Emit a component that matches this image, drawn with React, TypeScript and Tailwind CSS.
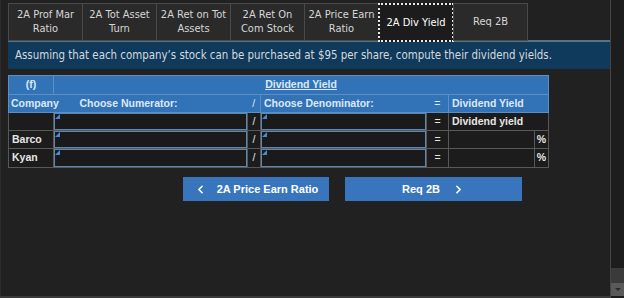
import { ChevronLeft, ChevronRight } from 'lucide-react';

const tabs = [
  { label: ['2A Prof Mar', 'Ratio'] },
  { label: ['2A Tot Asset', 'Turn'] },
  { label: ['2A Ret on Tot', 'Assets'] },
  { label: ['2A Ret On', 'Com Stock'] },
  { label: ['2A Price Earn', 'Ratio'] },
  { label: ['2A Div Yield'], active: true },
  { label: ['Req 2B'] },
];

const rows = [
  { company: '', result: 'Dividend yield', pct: false },
  { company: 'Barco', result: '', pct: true },
  { company: 'Kyan', result: '', pct: true },
];

function InputCell() {
  return (
    <div className="relative h-full w-full border border-[#5d87b3] bg-[#1a1a1a]">
      <span className="absolute left-0 top-0 h-0 w-0 rotate-90 border-l-[5px] border-t-[5px] border-l-transparent border-t-[#4a8ad0]" />
    </div>
  );
}

export default function App() {
  return (
    <div className="relative flex h-[298px] w-[624px] overflow-hidden bg-[#212121] font-['Liberation_Sans',Arial,sans-serif]">
      <div className="flex w-[610px] flex-col border-l border-[#2c2c2c] pl-[7px]">
        {/* Tabs */}
        <div className="relative z-10 flex h-[41px] items-start pt-[3px] font-['DejaVu_Sans_Condensed','DejaVu_Sans',sans-serif] text-[11px] leading-[14px] text-[#d6d6d6]">
          {tabs.map((tab, i) =>
            tab.active ? (
              <div
                key={i}
                className="-ml-px flex h-[39px] w-[76px] items-center justify-center border-2 border-dotted border-[#e8e8e8] bg-[#1c1c1c] text-center text-white"
              >
                {tab.label[0]}
              </div>
            ) : (
              <div
                key={i}
                className={`flex h-[38px] w-[75px] flex-col items-center justify-center border border-[#4a4a4a] bg-[#2a2a2a] text-center ${
                  i > 0 ? '-ml-px' : ''
                }`}
              >
                {tab.label.map((l) => (
                  <span key={l}>{l}</span>
                ))}
              </div>
            )
          )}
        </div>

        {/* Instructions */}
        <div className="-mt-px flex h-[29px] w-[602px] items-center border-t-2 border-[#557488] bg-[#0f3a5b] pl-[7px] font-['DejaVu_Sans_Condensed','DejaVu_Sans',sans-serif] text-[11.4px] text-[#d4d9de]">
          Assuming that each company’s stock can be purchased at $95 per share, compute their dividend yields.
        </div>

        {/* Table */}
        <div className="pt-[6px]">
          <table className="w-[540px] table-fixed border-collapse text-[10.5px] font-bold">
            <colgroup>
              <col className="w-[45px]" />
              <col className="w-[194px]" />
              <col className="w-[13px]" />
              <col className="w-[166px]" />
              <col className="w-[22px]" />
              <col className="w-[86px]" />
              <col className="w-[14px]" />
            </colgroup>
            <thead className="bg-[#3273b8] text-[#dce8f5]">
              <tr className="h-[19px]">
                <th className="border border-[#5d8fc4] text-center font-bold">(f)</th>
                <th colSpan={6} className="border border-[#5d8fc4] text-center font-bold underline">
                  Dividend Yield
                </th>
              </tr>
              <tr className="h-[18px]">
                <th className="whitespace-nowrap border-y border-l border-[#5d8fc4] pl-[2px] text-left">Company</th>
                <th className="border-y border-[#5d8fc4] pl-[26px] text-left">Choose Numerator:</th>
                <th className="border-y border-[#5d8fc4] text-center font-normal">/</th>
                <th className="border-y border-l border-[#5d8fc4] pl-[3px] text-left">Choose Denominator:</th>
                <th className="border-y border-[#5d8fc4] text-center font-normal">=</th>
                <th colSpan={2} className="border-y border-r border-l border-[#5d8fc4] pl-[3px] text-left">
                  Dividend Yield
                </th>
              </tr>
            </thead>
            <tbody className="text-[#e6e6e6]">
              {rows.map((row, i) => (
                <tr key={i} className={i === 2 ? 'h-[19px]' : 'h-[18px]'}>
                  <td className="border border-[#585858] bg-[#1c1c1c] pl-[3px]">{row.company}</td>
                  <td className="h-[18px] border border-[#585858] p-0">
                    <InputCell />
                  </td>
                  <td className="border border-[#585858] bg-[#1c1c1c] text-center font-normal">/</td>
                  <td className="h-[18px] border border-[#585858] p-0">
                    <InputCell />
                  </td>
                  <td className="border border-[#585858] bg-[#1c1c1c] text-center font-normal">=</td>
                  {row.pct ? (
                    <>
                      <td className="border border-[#585858] bg-[#1c1c1c]" />
                      <td className="border border-[#585858] bg-[#1c1c1c] text-center">%</td>
                    </>
                  ) : (
                    <td colSpan={2} className="border border-[#585858] bg-[#1c1c1c] pl-[3px]">
                      {row.result}
                    </td>
                  )}
                </tr>
              ))}
            </tbody>
          </table>
        </div>

        {/* Navigation */}
        <div className="flex gap-[16px] pl-[175px] pt-[9px] text-[11px] font-bold text-white">
          <button className="flex h-[24px] w-[146px] items-center justify-center gap-[10px] bg-[#3875bd]">
            <ChevronLeft size={13} strokeWidth={3} />
            <span>2A Price Earn Ratio</span>
          </button>
          <button className="flex h-[24px] w-[177px] items-center justify-center gap-[12px] bg-[#3875bd]">
            <span>Req 2B</span>
            <ChevronRight size={13} strokeWidth={3} />
          </button>
        </div>
      </div>

      {/* Scrollbar */}
      <div className="flex w-[14px] flex-col border-l border-[#454545] bg-[#1d1d1d]">
        <div className="flex-1" />
        <div className="h-[15px] bg-[#3a3a3a]" />
        <div className="flex h-[13px] items-center justify-center bg-[#5a5a5a]">
          <span className="h-0 w-0 border-x-[3px] border-t-[3px] border-x-transparent border-t-[#2a2a2a]" />
        </div>
        <div className="h-[2px]" />
      </div>
      <div className="absolute bottom-0 left-0 h-[2px] w-[610px] bg-[#3a3a3a]" />
    </div>
  );
}
